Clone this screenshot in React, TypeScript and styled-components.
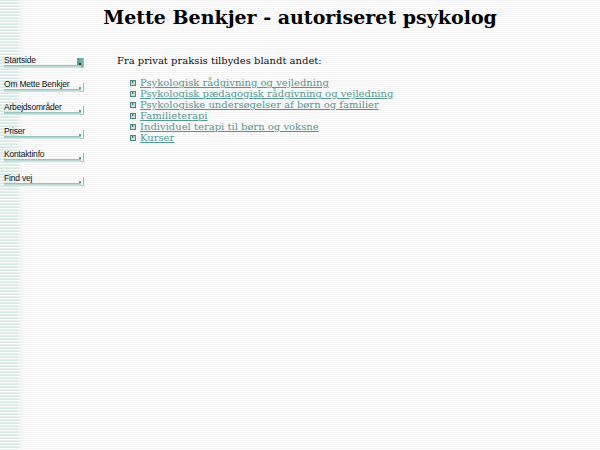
import styled, { createGlobalStyle } from "styled-components"

const GlobalStyle = createGlobalStyle`
  html, body {
    margin: 0;
    padding: 0;
    height: 100%;
  }
  body {
    background-color: #fdfdfd;
    background-image:
      linear-gradient(to right, rgba(255, 255, 255, 0) 0px, rgba(255, 255, 255, 0) 16px, rgba(253, 253, 253, 0.6) 21px, rgba(253, 253, 253, 0) 22px),
      repeating-linear-gradient(to bottom, #d6e8e3 0px, #d6e8e3 1px, #fbfdfc 1px, #fbfdfc 2px, #e4efec 2px, #e4efec 3px),
      repeating-linear-gradient(to bottom, #f3f3f3 0px, #f3f3f3 1px, #fefefe 1px, #fefefe 2px);
    background-size: 22px 100%, 22px 100%, 100% 100%;
    background-repeat: no-repeat, no-repeat, repeat;
    font-family: "DejaVu Serif", serif;
  }
`

const Page = styled.div`
  width: 600px;
  min-height: 450px;
`

const Title = styled.h1`
  margin: 0;
  padding: 4px 0 0 0;
  text-align: center;
  font-family: "DejaVu Serif", serif;
  font-size: 19px;
  font-weight: bold;
  color: #000;
  line-height: 26px;
`

const Body = styled.div`
  display: flex;
  padding-top: 23px;
`

const Nav = styled.nav`
  width: 80px;
  margin-left: 4px;
  display: flex;
  flex-direction: column;
  gap: 8.5px;
`

const NavItem = styled.a`
  display: flex;
  align-items: flex-end;
  box-sizing: border-box;
  height: 15px;
  position: relative;
  text-decoration: none;
  color: #111;
  font-family: "Liberation Sans", Arial, sans-serif;
  font-size: 8.5px;
  line-height: 10px;
  padding-bottom: 3px;
  &::after {
    content: "";
    position: absolute;
    left: 0;
    right: 3px;
    bottom: 0;
    height: 3px;
    background: linear-gradient(to bottom, #7fb8b0 0px, #a9d2cc 1px, #d6eae6 3px);
  }
`

const NavLabel = styled.span`
  flex: 1;
  letter-spacing: -0.2px;
`

const Cap = styled.span<{ $active?: boolean }>`
  position: absolute;
  right: 0;
  bottom: 0;
  width: 6px;
  height: ${(p) => (p.$active ? "9px" : "8px")};
  border-right: 1px solid #8dbcb6;
  border-bottom: 1px solid #8dbcb6;
  border-radius: 0 0 2px 0;
  background: ${(p) => (p.$active ? "linear-gradient(to right, #4f9f96, #7dbcb3)" : "transparent")};
  &::before {
    content: "";
    position: absolute;
    left: 2px;
    bottom: 2px;
    width: 2px;
    height: 2px;
    background: ${(p) => (p.$active ? "#0f3f3a" : "#5f9c94")};
  }
`

const Content = styled.div`
  margin-left: 33px;
  padding-top: 1px;
  font-family: "DejaVu Serif", serif;
  font-size: 10px;
  color: #111;
`

const Intro = styled.p`
  margin: 0 0 9px 0;
  line-height: 14px;
`

const List = styled.ul`
  list-style: none;
  margin: 0;
  padding: 0 0 0 13px;
`

const Item = styled.li`
  display: flex;
  align-items: center;
  line-height: 11px;
  height: 11px;
`

const Bullet = styled.span`
  display: inline-block;
  width: 6px;
  height: 6px;
  margin-right: 4px;
  background: #c8e0da;
  border: 1px solid #4a8a82;
  box-sizing: border-box;
  position: relative;
  &::after {
    content: "";
    position: absolute;
    left: 1px;
    top: 0.5px;
    width: 0;
    height: 0;
    border-top: 1.5px solid transparent;
    border-bottom: 1.5px solid transparent;
    border-left: 2.5px solid #1e4c46;
  }
`

const Link = styled.a`
  color: #4f9a92;
  text-decoration: underline;
  font-size: 10px;
`

const navItems = ["Startside", "Om Mette Benkjer", "Arbejdsområder", "Priser", "Kontaktinfo", "Find vej"]

const services = [
  "Psykologisk rådgivning og vejledning",
  "Psykologisk pædagogisk rådgivning og vejledning",
  "Psykologiske undersøgelser af børn og familier",
  "Familieterapi",
  "Individuel terapi til børn og voksne",
  "Kurser",
]

const App = () => {
  return (
    <Page>
      <GlobalStyle />
      <Title>Mette Benkjer - autoriseret psykolog</Title>
      <Body>
        <Nav>
          {navItems.map((label, i) => (
            <NavItem href="#" key={label}>
              <NavLabel>{label}</NavLabel>
              <Cap $active={i === 0} />
            </NavItem>
          ))}
        </Nav>
        <Content>
          <Intro>Fra privat praksis tilbydes blandt andet:</Intro>
          <List>
            {services.map((s) => (
              <Item key={s}>
                <Bullet />
                <Link href="#">{s}</Link>
              </Item>
            ))}
          </List>
        </Content>
      </Body>
    </Page>
  )
}

export default App
